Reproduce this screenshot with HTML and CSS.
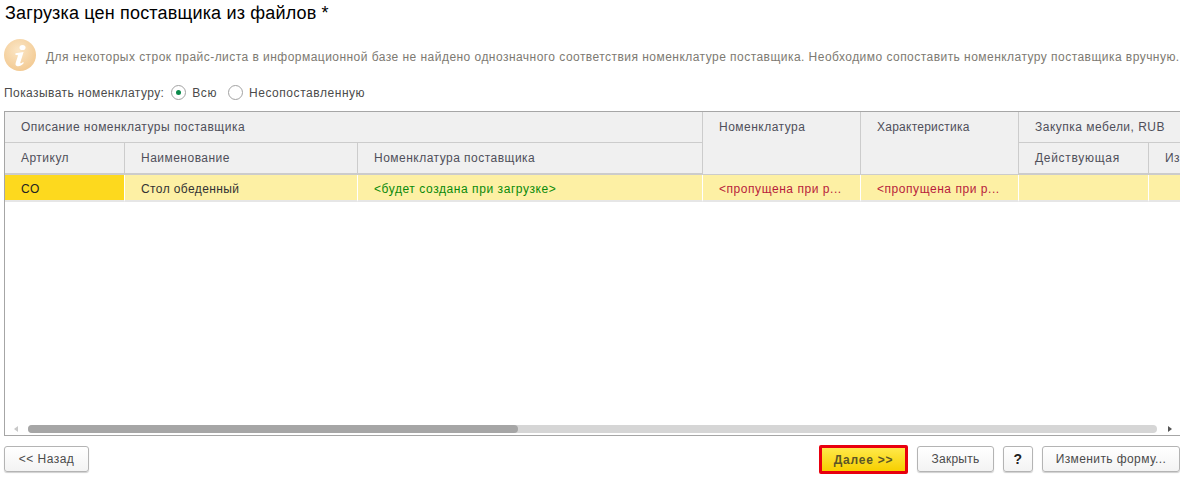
FILE: index.html
```html
<!DOCTYPE html>
<html lang="ru">
<head>
<meta charset="utf-8">
<title>Загрузка цен поставщика из файлов</title>
<link rel="stylesheet" href="styles.css">
</head>
<body>
<div class="page">
  <h1 class="title">Загрузка цен поставщика из файлов *</h1>
  <div class="notice">
    <svg class="info-icon" width="32" height="32" viewBox="0 0 32 32" aria-hidden="true">
      <defs>
        <radialGradient id="infoGrad" cx="45%" cy="35%" r="70%">
          <stop offset="0" stop-color="#fbe6c6"/>
          <stop offset="1" stop-color="#f2c88f"/>
        </radialGradient>
      </defs>
      <circle cx="16" cy="16" r="16" fill="url(#infoGrad)"/>
      <ellipse cx="18.5" cy="8.5" rx="3" ry="2.6" fill="#fff"/>
      <path d="M11.5 14.2 L19.6 13 L16.3 23.4 C16 24.6 17 24.8 19.2 23 L19.8 24 C17.5 26.6 15 27.6 12.9 27 C11.3 26.4 11.3 25 11.8 23.4 L14.1 16.2 L11.3 15.8 Z" fill="#fff"/>
    </svg>
    <span class="notice-text">Для некоторых строк прайс-листа в информационной базе не найдено однозначного соответствия номенклатуре поставщика. Необходимо сопоставить номенклатуру поставщика вручную.</span>
  </div>
  <div class="filter">
    <span class="filter-label">Показывать номенклатуру:</span>
    <span class="radio radio-on"></span><span class="radio-text">Всю</span>
    <span class="radio"></span><span class="radio-text">Несопоставленную</span>
  </div>
  <div class="table">
    <div class="grid">
      <div class="th group">Описание номенклатуры поставщика</div>
      <div class="th tall c4">Номенклатура</div>
      <div class="th tall c5 tight">Характеристика</div>
      <div class="th price">Закупка мебели, RUB</div>
      <div class="th r2 c1">Артикул</div>
      <div class="th r2 c2">Наименование</div>
      <div class="th r2 c3">Номенклатура поставщика</div>
      <div class="th r2 c6 wide">Действующая</div>
      <div class="th r2 c7">Из</div>
      <div class="td cur c1">СО</div>
      <div class="td c2">Стол обеденный</div>
      <div class="td green c3">&lt;будет создана при загрузке&gt;</div>
      <div class="td red c4">&lt;пропущена при р...</div>
      <div class="td red c5">&lt;пропущена при р...</div>
      <div class="td c6"></div>
      <div class="td c7"></div>
    </div>
    <div class="scrollbar">
      <span class="arrow arrow-left"></span>
      <div class="track"><div class="thumb"></div></div>
      <span class="arrow arrow-right"></span>
    </div>
  </div>
  <div class="actions">
    <button class="btn back">&lt;&lt; Назад</button>
    <button class="btn next">Далее &gt;&gt;</button>
    <button class="btn close">Закрыть</button>
    <button class="btn help">?</button>
    <button class="btn change">Изменить форму...</button>
  </div>
</div>
</body>
</html>
```
FILE: styles.css
```css
* { box-sizing: border-box; }
html, body { margin: 0; padding: 0; background: #fff; overflow: hidden; }
body { width: 1180px; height: 479px; font-family: "Liberation Sans", Arial, sans-serif; font-size: 12px; color: #4b4b4b; }
.page { display: flex; flex-direction: column; height: 479px; padding-left: 4px; }
.title { margin: 0 0 0 1px; height: 38px; padding-top: 3px; font-size: 18px; line-height: 20px; font-weight: 400; color: #000; white-space: nowrap; letter-spacing: 0.17px; }
.notice { display: flex; align-items: center; height: 38px; gap: 10px; white-space: nowrap; overflow: hidden; }
.info-icon { flex: none; align-self: flex-start; margin-top: 1px; }
.notice-text { color: #7d7a72; letter-spacing: 0.46px; }
.filter { display: flex; align-items: center; height: 19px; margin-top: 7px; white-space: nowrap; color: #4b4b4b; letter-spacing: 0.42px; }
.filter-label { margin-right: 7px; }
.radio { width: 15px; height: 15px; border: 1px solid #a2a2a2; border-radius: 50%; background: #fff; display: inline-flex; align-items: center; justify-content: center; margin-right: 6px; }
.radio-on::after { content: ""; width: 5px; height: 5px; border-radius: 50%; background: #0b8a4b; }
.radio-text { margin-right: 11px; letter-spacing: 0.55px; }
.table { margin-top: 9px; height: 325px; width: 1176px; border: 1px solid #a6a6a6; border-right: 0; display: flex; flex-direction: column; justify-content: space-between; overflow: hidden; }
.grid { display: grid; grid-template-columns: 120px 233px 345px 158px 158px 130px 40px; grid-template-rows: 31px 32px 27px; }
.th { background: #f0f0f0; border-right: 1px solid #ccc; border-bottom: 1px solid #ccc; padding: 8px 0 0 16px; white-space: nowrap; overflow: hidden; letter-spacing: 0.48px; color: #4f4f5a; }
.tight { letter-spacing: 0.25px; }
.wide { letter-spacing: 0.7px; }
.group { grid-column: 1 / 4; grid-row: 1; }
.tall { grid-row: 1 / 3; }
.c1 { grid-column: 1; } .c2 { grid-column: 2; } .c3 { grid-column: 3; }
.c4 { grid-column: 4; } .c5 { grid-column: 5; } .c6 { grid-column: 6; } .c7 { grid-column: 7; }
.price { grid-column: 6 / 8; grid-row: 1; }
.r2 { grid-row: 2; border-bottom: 2px solid #ccc; }
.td { grid-row: 3; background: #fdf0a4; border-right: 1px solid #fff; border-bottom: 2px solid #e6e6e6; padding: 7px 0 0 16px; white-space: nowrap; overflow: hidden; letter-spacing: 0.4px; color: #333; }
.cur { background: #fdd91e; color: #222; letter-spacing: 0.6px; }
.green { color: #0a8a0a; letter-spacing: 0.57px; }
.red { color: #b81c3c; letter-spacing: 0.55px; }
.scrollbar { display: flex; align-items: center; height: 12px; }
.arrow { width: 0; height: 0; border-top: 3px solid transparent; border-bottom: 3px solid transparent; }
.arrow-left { margin-left: 9px; border-right: 4px solid #c8c8c8; }
.arrow-right { margin-left: 11px; border-left: 4px solid #555; }
.track { width: 1129px; height: 8px; margin-left: 10px; background: #d6d6d6; border-radius: 4px; }
.thumb { width: 490px; height: 8px; background: #a6a6a6; border-radius: 4px; }
.actions { display: flex; align-items: flex-start; margin-top: 10px; }
.btn { height: 26px; padding: 0; font: inherit; letter-spacing: 0.4px; color: #4b4b4b; background: linear-gradient(#fff, #f3f3f3); border: 1px solid #b4b4b4; border-radius: 3px; box-shadow: 0 1px 1px #d0d0d0; white-space: nowrap; }
.back { width: 85px; margin-right: 730px; letter-spacing: 0.5px; }
.next { width: 89px; height: 29px; margin-top: -1px; margin-right: 9px; border: 3px solid #e8000e; border-radius: 2px; background: linear-gradient(#ffe94a, #f7cf00); font-weight: 700; color: #5c5626; box-shadow: none; letter-spacing: 0.75px; }
.close { width: 77px; margin-right: 9px; letter-spacing: 0.25px; }
.help { width: 30px; margin-right: 9px; font-weight: 700; color: #222; font-size: 14px; }
.change { width: 138px; flex: none; }
```
